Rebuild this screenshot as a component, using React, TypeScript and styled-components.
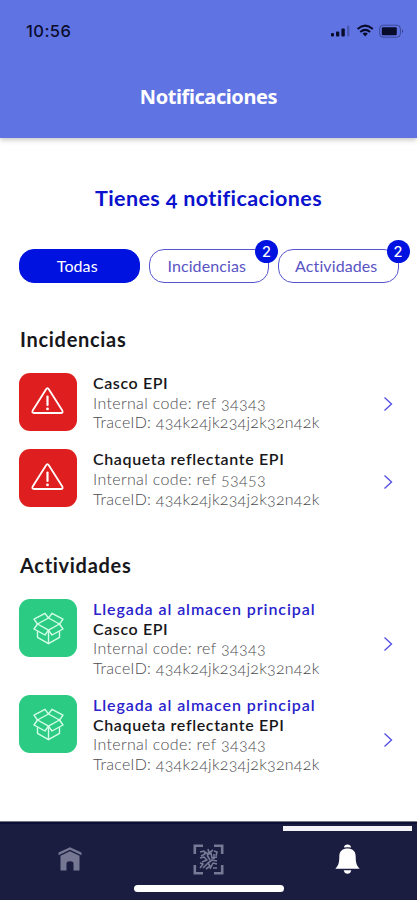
import React from "react";
import styled, { createGlobalStyle } from "styled-components";

const GlobalStyle = createGlobalStyle`
  * { box-sizing: border-box; }
  body { margin: 0; background: #fff; }
  h1, h2, p { margin: 0; }
  button { font: inherit; }
`;

const Screen = styled.div`
  width: 417px;
  height: 900px;
  display: flex;
  flex-direction: column;
  overflow: hidden;
  background: #fff;
  color: #17171b;
  font-family: Lato, "Open Sans", sans-serif;
  font-variant-numeric: oldstyle-nums;
`;

const Header = styled.header`
  height: 138px;
  flex: none;
  background: #5f73e3;
  box-shadow: 0 2px 5px rgba(70, 70, 60, 0.3);
`;

const StatusBar = styled.div`
  height: 62px;
  padding: 0 12px 0 26px;
  display: flex;
  align-items: center;
  justify-content: space-between;
  color: #0a0d2c;
`;

const Clock = styled.span`
  font: 500 16.5px/20px Inter, sans-serif;
  letter-spacing: 0.45px;
`;

const HeaderTitle = styled.h1`
  padding-top: 21px;
  text-align: center;
  color: #fff;
  font: 700 20px/28px "Noto Sans", sans-serif;
  letter-spacing: -0.42px;
`;

const Content = styled.main`
  flex: 1;
  display: flex;
  flex-direction: column;
`;

const Summary = styled.h2`
  margin-top: 46px;
  text-align: center;
  color: #0a12cd;
  font-size: 21.5px;
  line-height: 28px;
  font-weight: 700;
  letter-spacing: 0.38px;
`;

const Filters = styled.div`
  margin-top: 37px;
  padding-left: 19px;
  display: flex;
  gap: 9px;
`;

const Pill = styled.button<{ $active?: boolean }>`
  position: relative;
  width: 120.5px;
  height: 34px;
  padding: 0 4px 2px 0;
  border: 1px solid ${(p) => (p.$active ? "#0012df" : "#5755ce")};
  border-radius: 15px;
  background: ${(p) => (p.$active ? "#0012df" : "#fff")};
  color: ${(p) => (p.$active ? "#fff" : "#5954c4")};
  font-size: 16px;
  letter-spacing: 0.1px;
`;

const Badge = styled.span<{ $right: number }>`
  position: absolute;
  top: -10px;
  right: ${(p) => p.$right}px;
  width: 23px;
  height: 23px;
  border-radius: 50%;
  display: grid;
  place-items: center;
  background: #0012df;
  color: #fff;
  font: 500 14.5px/23px Inter, sans-serif;
  letter-spacing: 0;
`;

const Section = styled.section<{ $top: number }>`
  padding: ${(p) => p.$top}px 20px 0;
`;

const SectionTitle = styled.h2`
  font-size: 20px;
  line-height: 26px;
  font-weight: 700;
  letter-spacing: 0.7px;
`;

const List = styled.div`
  margin-top: 21px;
  display: flex;
  flex-direction: column;
  gap: 17.6px;
`;

const Row = styled.article`
  display: flex;
  align-items: flex-start;
`;

const Tile = styled.div<{ $color: string }>`
  width: 58px;
  height: 58px;
  margin-left: -1px;
  flex: none;
  border-radius: 11px;
  display: grid;
  place-items: center;
  background: ${(p) => p.$color};
`;

const Details = styled.div`
  margin-left: 16px;
  flex: 1;
  line-height: 19.6px;
  font-size: 16px;
  white-space: nowrap;
`;

const Line = styled.p<{ $kind: "event" | "name" | "meta"; $track: number }>`
  font-weight: ${(p) => (p.$kind === "meta" ? 300 : 600)};
  color: ${(p) => ({ event: "#2922cc", name: "#17171b", meta: "#4c4c50" })[p.$kind]};
  letter-spacing: ${(p) => p.$track}px;
`;

const Chevron = styled.svg<{ $top: number }>`
  width: 10px;
  height: 16px;
  margin: ${(p) => p.$top}px 4px 0 0;
  flex: none;
`;

const Nav = styled.nav`
  height: 79px;
  flex: none;
  border-top: 1px solid #777886;
  background: #1b1d40;
  display: grid;
  grid-template-columns: repeat(3, 139px);
  box-shadow: inset 0 2px 0 #0d1036;
  position: relative;
`;

const NavItem = styled.div`
  display: flex;
  justify-content: center;
  padding-top: 22px;
`;

const ActiveMark = styled.div`
  position: absolute;
  top: 4px;
  left: 283px;
  width: 129px;
  height: 4.5px;
  background: #f3f3f8;
`;

const HomeIndicator = styled.div`
  position: absolute;
  left: 134px;
  bottom: 8px;
  width: 150px;
  height: 7px;
  border-radius: 4px;
  background: #fff;
`;

const StatusIcons = () => (
  <svg width="76" height="18" viewBox="0 0 76 18">
    <g fill="#080b29">
      <rect x="2" y="11" width="3" height="3.5" rx="1" />
      <rect x="7" y="9.5" width="3.3" height="5" rx="1" />
      <rect x="12.4" y="6.5" width="3.4" height="8" rx="1" />
      <rect x="18" y="3.5" width="2.4" height="11" rx="1" opacity=".25" />
      <path d="M33.6 11.4a4.2 4.2 0 0 1 5.2 0l-2.6 3.1z" />
      <rect x="52.8" y="5.2" width="15" height="8" rx="1.2" />
      <path d="M73 7.4q2 1.6 0 3.7z" opacity=".55" />
    </g>
    <g fill="none" stroke="#080b29" strokeWidth="2">
      <path d="M28.6 7q7.6-6.7 15.2 0M31.3 9.9q4.9-4.1 9.8 0" />
      <rect x="50.7" y="3.2" width="20.7" height="12" rx="3.5" strokeWidth="1" opacity=".4" />
    </g>
  </svg>
);

const WarningIcon = () => (
  <svg width="34" height="30" viewBox="0 0 34 30" fill="none" stroke="#fff" strokeLinejoin="round" strokeLinecap="round">
    <path d="M15.1 2.2Q16.4 0 17.8 2.2L31.3 23.6Q32.4 26 29.8 26H3.1Q.5 26 1.7 23.6Z" strokeWidth="1.8" />
    <path d="M16.5 9.6v8.3" strokeWidth="2.2" />
    <circle cx="16.5" cy="21.9" r="1.4" fill="#fff" stroke="none" />
  </svg>
);

const BoxIcon = () => (
  <svg width="32" height="34" viewBox="0 0 32 34" fill="none" stroke="#d6ffe8" strokeWidth="1.4" strokeLinejoin="round">
    <path d="M16.5 7 5.5 13 2 8.2 13 2.3zM16.5 7l11 6L31 8.2 20 2.3z" />
    <path d="M5.5 13 2 18l11 6 3.5-4.8zM27.5 13l3.5 5-11 6-3.5-4.8z" />
    <path d="M5.5 20.2v6.2l11 6.3 11-6.3v-6.2M16.5 19.2v13.5" />
  </svg>
);

const HomeIcon = () => (
  <svg width="24" height="27" viewBox="0 0 24 27" fill="#757793">
    <path d="M.5 8.6 12 3.2l11.5 5.4v2.6L12 5.7.5 11.2z" />
    <path d="m2.5 11.8 9.5-4.6 9.5 4.6v14.8h-6v-7.4q0-2-3.5-2t-3.5 2v7.4h-6z" />
  </svg>
);

const ScanIcon = () => (
  <svg width="31" height="31" viewBox="0 0 31 31" fill="none" stroke="#777995">
    <path d="M1.8 10V1.8H10M21 1.8h8.2V10M1.8 21v8.2H10M21 29.2h8.2V21" strokeWidth="2.6" />
    <path d="m7 8 4-1 1 3-4 2M15 5l1 4 4-3M21 7l3 1-1 4M7 14l4-1 3 3-5 2M14 11l4-2 1 5 5-1M17 16l-3-5M15 19l4-3 5 1M7 19l3 1-3 4M10 24l5-5 2 3-4 3M17 25l3-6 4 1M20 24h4M12 8l3 2M21 10v5" strokeWidth="1.6" strokeLinejoin="round" />
  </svg>
);

const BellIcon = () => (
  <svg width="25" height="31" viewBox="0 0 25 31" fill="#fff">
    <path d="M8.9 3.6Q9.4.5 12.5.5t3.6 3.1Q12.5 2.8 8.9 3.6Z" />
    <path d="M4.3 12.5C4.3 7 7.8 4.6 12.5 4.6s8.2 2.4 8.2 7.9c0 7.2 1.3 9.3 4 12.3H.3c2.7-3 4-5.1 4-12.3Z" />
    <path d="M8.7 26.3h7.6q-.8 3.5-3.8 3.5t-3.8-3.5Z" />
  </svg>
);

type LineData = { kind: "event" | "name" | "meta"; text: string; track: number };

const event: LineData = { kind: "event", text: "Llegada al almacen principal", track: 0.92 };
const helmet: LineData = { kind: "name", text: "Casco EPI", track: 0.6 };
const jacket: LineData = { kind: "name", text: "Chaqueta reflectante EPI", track: 0.63 };
const code = (ref: string): LineData => ({ kind: "meta", text: `Internal code: ref ${ref}`, track: 0.35 });
const trace: LineData = { kind: "meta", text: "TraceID: 434k24jk234j2k32n42k", track: 0.25 };

const Notice = ({ lines, activity, arrow }: { lines: LineData[]; activity?: boolean; arrow: number }) => (
  <Row>
    <Tile $color={activity ? "#2bcb84" : "#df1f1f"}>{activity ? <BoxIcon /> : <WarningIcon />}</Tile>
    <Details>
      {lines.map((line) => (
        <Line key={line.text} $kind={line.kind} $track={line.track}>{line.text}</Line>
      ))}
    </Details>
    <Chevron $top={arrow} viewBox="0 0 10 16" fill="none" stroke="#5651e2" strokeWidth="1.4">
      <path d="m1.5 1.5 7 6.5-7 6.5" />
    </Chevron>
  </Row>
);

export default function App() {
  return (
    <Screen>
      <GlobalStyle />
      <Header>
        <StatusBar>
          <Clock>10:56</Clock>
          <StatusIcons />
        </StatusBar>
        <HeaderTitle>Notificaciones</HeaderTitle>
      </Header>
      <Content>
        <Summary>Tienes 4 notificaciones</Summary>
        <Filters>
          <Pill $active>Todas</Pill>
          <Pill>Incidencias<Badge $right={-10}>2</Badge></Pill>
          <Pill>Actividades<Badge $right={-12}>2</Badge></Pill>
        </Filters>
        <Section $top={43}>
          <SectionTitle>Incidencias</SectionTitle>
          <List>
            <Notice lines={[helmet, code("34343"), trace]} arrow={22.5} />
            <Notice lines={[jacket, code("53453"), trace]} arrow={24.5} />
          </List>
        </Section>
        <Section $top={44}>
          <SectionTitle>Actividades</SectionTitle>
          <List>
            <Notice activity lines={[event, helmet, code("34343"), trace]} arrow={36.5} />
            <Notice activity lines={[event, jacket, code("34343"), trace]} arrow={36.5} />
          </List>
        </Section>
      </Content>
      <Nav>
        <NavItem><HomeIcon /></NavItem>
        <NavItem><ScanIcon /></NavItem>
        <NavItem><BellIcon /></NavItem>
        <ActiveMark />
        <HomeIndicator />
      </Nav>
    </Screen>
  );
}
